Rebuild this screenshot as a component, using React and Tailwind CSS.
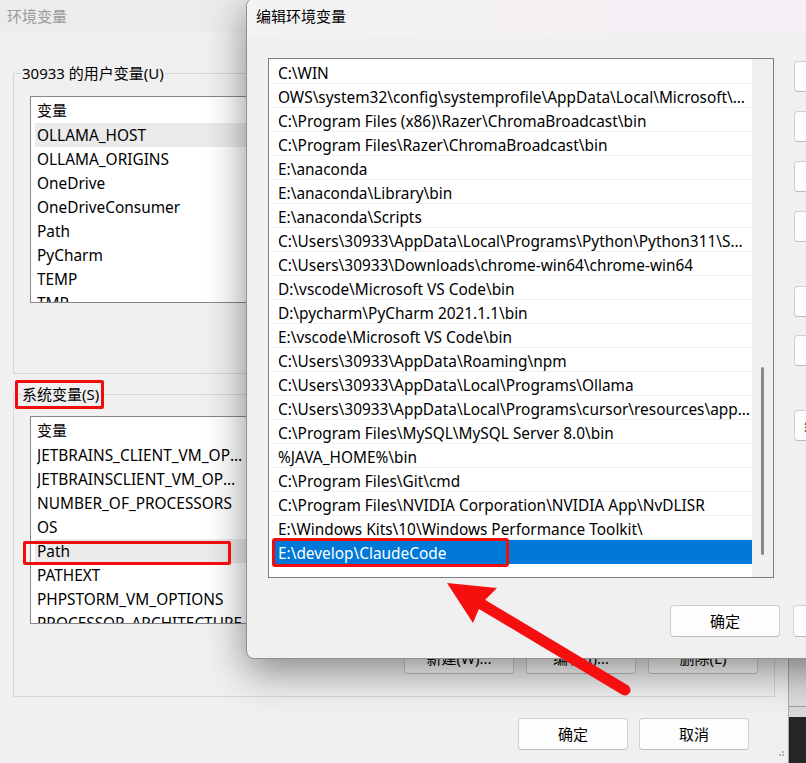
import React from "react";

const userVars = ["OLLAMA_HOST", "OLLAMA_ORIGINS", "OneDrive", "OneDriveConsumer", "Path", "PyCharm", "TEMP", "TMP"];
const sysVars = [
  "JETBRAINS_CLIENT_VM_OPTIONS",
  "JETBRAINSCLIENT_VM_OPTIONS",
  "NUMBER_OF_PROCESSORS",
  "OS",
  "Path",
  "PATHEXT",
  "PHPSTORM_VM_OPTIONS",
  "PROCESSOR_ARCHITECTURE",
];

const pathEntries = [
  "C:\\WIN",
  "OWS\\system32\\config\\systemprofile\\AppData\\Local\\Microsoft\\WindowsApps",
  "C:\\Program Files (x86)\\Razer\\ChromaBroadcast\\bin",
  "C:\\Program Files\\Razer\\ChromaBroadcast\\bin",
  "E:\\anaconda",
  "E:\\anaconda\\Library\\bin",
  "E:\\anaconda\\Scripts",
  "C:\\Users\\30933\\AppData\\Local\\Programs\\Python\\Python311\\Scripts\\",
  "C:\\Users\\30933\\Downloads\\chrome-win64\\chrome-win64",
  "D:\\vscode\\Microsoft VS Code\\bin",
  "D:\\pycharm\\PyCharm 2021.1.1\\bin",
  "E:\\vscode\\Microsoft VS Code\\bin",
  "C:\\Users\\30933\\AppData\\Roaming\\npm",
  "C:\\Users\\30933\\AppData\\Local\\Programs\\Ollama",
  "C:\\Users\\30933\\AppData\\Local\\Programs\\cursor\\resources\\app\\bin",
  "C:\\Program Files\\MySQL\\MySQL Server 8.0\\bin",
  "%JAVA_HOME%\\bin",
  "C:\\Program Files\\Git\\cmd",
  "C:\\Program Files\\NVIDIA Corporation\\NVIDIA App\\NvDLISR",
  "E:\\Windows Kits\\10\\Windows Performance Toolkit\\",
  "E:\\develop\\ClaudeCode",
];

const sideButtons = [
  { label: "新建(N)", gap: "mt-0" },
  { label: "编辑(E)", gap: "mt-[19px]" },
  { label: "浏览(B)...", gap: "mt-[19px]" },
  { label: "删除(D)", gap: "mt-[19px]" },
  { label: "上移(U)", gap: "mt-[44px]" },
  { label: "下移(O)", gap: "mt-[18px]" },
  { label: "编辑文本(T)...", gap: "mt-[44px]" },
];

function WinButton({ children, className = "" }) {
  return (
    <div
      className={
        "flex items-center justify-center rounded-[4px] border border-[#d0d0d0] border-b-[#bcbcbc] bg-[#fdfdfd] text-[15px] text-black " +
        className
      }
    >
      {children}
    </div>
  );
}

function VarList({ items, selected, height }) {
  return (
    <div className={"overflow-hidden border border-[#828790] bg-white " + height}>
      <div className="flex h-[26px] items-center pl-[6px] text-[15px]">
        <span className="w-[214px]">变量</span>
        <span>值</span>
      </div>
      {items.map((name, i) => (
        <div
          key={name}
          className={
            "ml-[4px] flex h-[24px] items-center pl-[2px] pt-[2px] text-[15.4px] " +
            (i === selected ? "bg-[#ebebeb]" : "")
          }
        >
          <span className="w-[206px] min-w-0 shrink-0 truncate">{name}</span>
        </div>
      ))}
    </div>
  );
}

function GroupBox({ title, children, height, mark }) {
  return (
    <fieldset className={"m-0 border border-[#d6d6d6] p-0 " + height}>
      <legend className="relative ml-[7px] px-[1px] text-[15px] leading-[20px] text-black">
        {title}
        {mark && (
          <span className="absolute -bottom-[5px] -left-[6px] -right-[4px] -top-[4px] rounded-[2px] border-[3px] border-[#f20d0d]" />
        )}
      </legend>
      <div className="px-[16px]">{children}</div>
    </fieldset>
  );
}

export default function App() {
  return (
    <div className="relative flex h-[763px] w-[806px] overflow-hidden bg-[#f0f0f0] font-['Noto_Sans','Noto_Sans_CJK_SC',sans-serif] text-black">
      {/* main environment variables window */}
      <div className="flex h-full w-[789px] flex-col border-r border-[#a8a8a8] bg-[#f0f0f0]">
        <div className="flex h-[32px] items-center bg-[#ececec] px-[7px] text-[15px] text-[#9a9a9a]">环境变量</div>
        <div className="flex flex-col px-[13px]">
          <div className="mt-[31px]">
            <GroupBox title="30933 的用户变量(U)" height="h-[311px]">
              <div className="mt-[13px]">
                <VarList items={userVars} selected={0} height="h-[207px]" />
              </div>
            </GroupBox>
          </div>
          <div className="mt-[10px]">
            <GroupBox title="系统变量(S)" height="h-[313px]" mark>
              <div className="mt-[12px]">
                <VarList items={sysVars} selected={4} height="h-[208px]" />
              </div>
              <div className="mt-[18px] flex justify-end gap-[12px]">
                <WinButton className="h-[32px] w-[110px]">新建(W)...</WinButton>
                <WinButton className="h-[32px] w-[110px]">编辑(I)...</WinButton>
                <WinButton className="h-[32px] w-[110px]">删除(L)</WinButton>
              </div>
            </GroupBox>
          </div>
          <div className="mt-[21px] flex justify-end gap-[11px] pr-[26px]">
            <WinButton className="h-[32px] w-[110px]">确定</WinButton>
            <WinButton className="h-[32px] w-[110px]">取消</WinButton>
          </div>
        </div>
        <div className="mt-auto mb-[4px] mr-[4px] flex justify-end">
          <svg width="8" height="8" viewBox="0 0 8 8">
            <rect x="6" y="0" width="2" height="2" fill="#b5b5b5" />
            <rect x="3" y="3" width="2" height="2" fill="#b5b5b5" />
            <rect x="6" y="3" width="2" height="2" fill="#b5b5b5" />
          </svg>
        </div>
      </div>

      {/* window sitting behind, at the right edge */}
      <div className="flex flex-1 flex-col">
        <div className="h-[707px] border-b border-[#9c9c9c] bg-[#dcdcdc]" />
        <div className="h-[10px] bg-[#d8d8d8]" />
        <div className="flex-1 bg-[#252525]" />
      </div>

      {/* edit dialog */}
      <div className="absolute left-[246px] top-[-2px] flex h-[661px] w-[680px] flex-col overflow-hidden rounded-l-[8px] border border-[#8f8f8f] bg-[#f0f0f0] shadow-[0_12px_40px_rgba(0,0,0,0.45)]">
        <div className="flex h-[35px] shrink-0 items-center bg-gradient-to-r from-[#f3f3f3] to-[#f7eef6] pl-[9px] text-[15px] text-black">
          编辑环境变量
        </div>
        <div className="flex pl-[21px] pt-[24px]">
          <div className="flex h-[520px] w-[506px] shrink-0 overflow-hidden border border-[#7d7d7d] bg-white">
            <div className="flex min-w-0 flex-1 flex-col pt-[1px]">
              {pathEntries.map((p, i) => {
                const sel = i === pathEntries.length - 1;
                return (
                  <div
                    key={i}
                    className={
                      "ml-[4px] flex h-[24px] shrink-0 items-center border-b pl-[5px] pr-[2px] pt-[4px] text-[15.4px] " +
                      (sel ? "border-[#0078d7] bg-[#0078d7] text-white" : "border-[#efefef]")
                    }
                  >
                    <span className="min-w-0 truncate">{p}</span>
                  </div>
                );
              })}
            </div>
            <div className="flex w-[21px] shrink-0 flex-col items-center bg-[#f0f0f0] pt-[308px]">
              <div className="h-[188px] w-[3px] rounded-full bg-[#8a8a8a]" />
            </div>
          </div>
          <div className="ml-[20px] flex shrink-0 flex-col pt-[3px]">
            {sideButtons.map((b) => (
              <WinButton key={b.label} className={"h-[31px] w-[110px] whitespace-nowrap " + b.gap}>
                {b.label}
              </WinButton>
            ))}
          </div>
        </div>
        <div className="mt-[27px] flex gap-[13px] pl-[423px]">
          <WinButton className="h-[32px] w-[110px] shrink-0 border-[#0067c0] border-b-[#0067c0]">确定</WinButton>
          <WinButton className="h-[32px] w-[110px] shrink-0">取消</WinButton>
        </div>
      </div>

      {/* red annotation marks */}
      <div className="pointer-events-none absolute left-[23px] top-[541px] h-[24px] w-[208px] rounded-[2px] border-[3px] border-[#f20d0d]" />
      <div className="pointer-events-none absolute left-[272px] top-[538px] h-[29px] w-[237px] rounded-[3px] border-[3px] border-[#f20d0d]" />
      <svg className="pointer-events-none absolute left-0 top-0" width="806" height="763" viewBox="0 0 806 763">
        <line x1="625" y1="690" x2="478" y2="602" stroke="#f50f0f" strokeWidth="11" strokeLinecap="round" />
        <polygon points="447,583 497,588 481,604 473,623" fill="#f50f0f" />
      </svg>
    </div>
  );
}
